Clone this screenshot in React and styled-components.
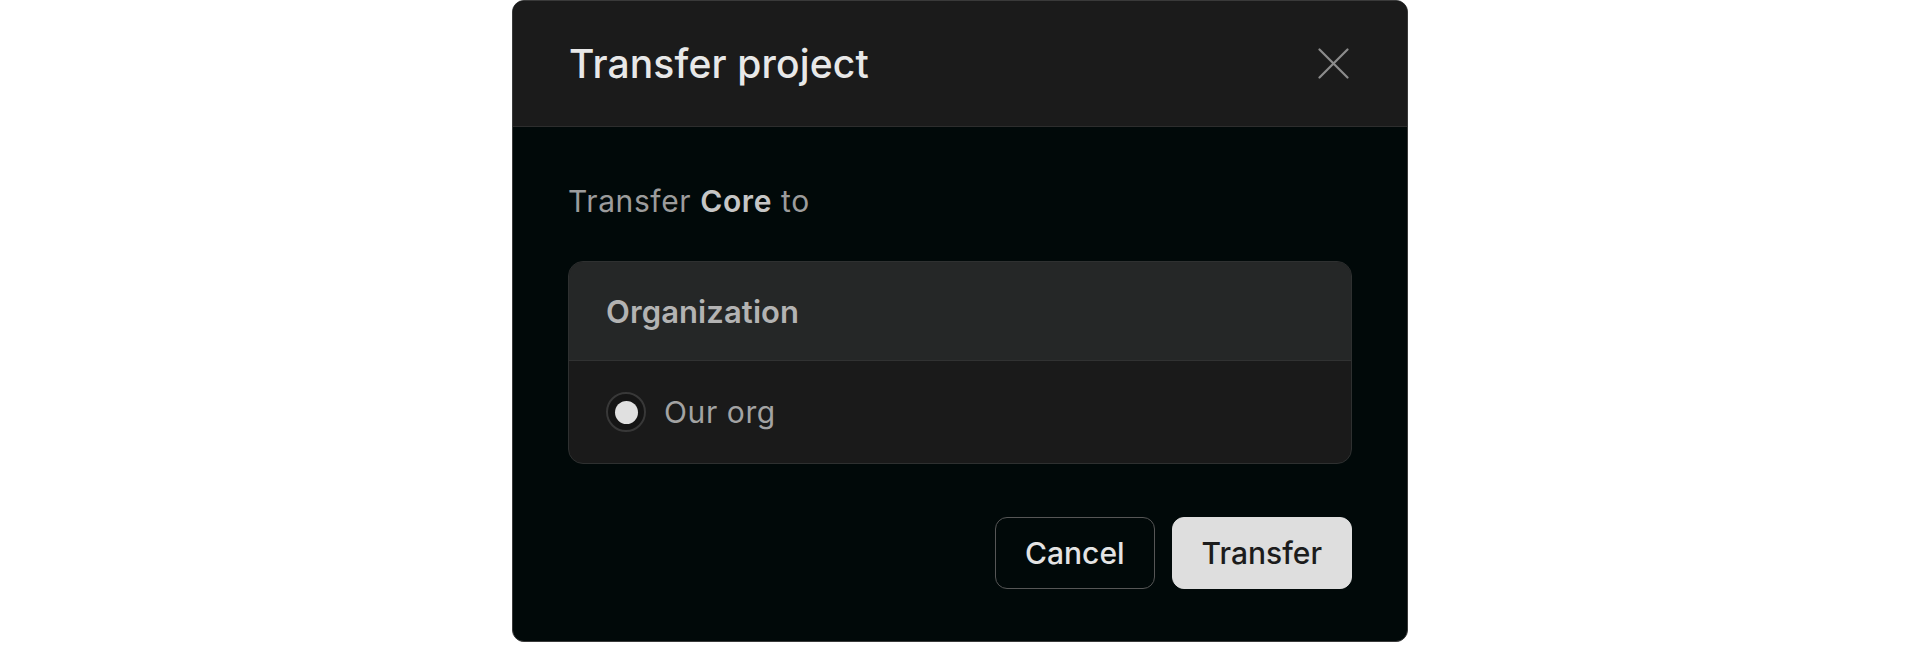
import React from "react";
import styled, { createGlobalStyle } from "styled-components";

const Global = createGlobalStyle`
  html, body { margin: 0; padding: 0; background: #ffffff; }
  body { font-family: Inter, "Noto Sans", "Liberation Sans", sans-serif; }
  * { box-sizing: border-box; }
`;

const Page = styled.div`
  display: flex;
  justify-content: center;
  background: #ffffff;
  min-height: 645px;
`;

const Modal = styled.div`
  width: 896px;
  height: 642px;
  display: flex;
  flex-direction: column;
  background: #010909;
  border: 1px solid #3a3a3a;
  border-radius: 12px;
  overflow: hidden;
`;

const Header = styled.div`
  height: 126px;
  flex: none;
  display: flex;
  align-items: center;
  justify-content: space-between;
  padding: 0 58px 0 56px;
  background: #1b1b1b;
  border-bottom: 1px solid #2d2d2d;
`;

const Title = styled.h2`
  margin: 0;
  font-size: 39px;
  font-weight: 500;
  color: #e8e8e8;
  letter-spacing: 0.15px;
`;

const CloseButton = styled.button`
  width: 32px;
  height: 32px;
  padding: 0;
  display: flex;
  align-items: center;
  justify-content: center;
  background: transparent;
  border: none;
  color: #8c8c8c;
  cursor: pointer;
`;

const Body = styled.div`
  flex: 1;
  display: flex;
  flex-direction: column;
  padding: 52px 55px 0 55px;
`;

const Lead = styled.p`
  margin: 0;
  font-size: 30px;
  line-height: 45px;
  color: #9c9c9c;
  font-weight: 400;
  letter-spacing: 0.6px;

  b {
    font-weight: 600;
    color: #c6c6c6;
  }
`;

const Card = styled.div`
  margin-top: 37px;
  border: 1px solid #2e3030;
  border-radius: 15px;
  overflow: hidden;
  background: #1a1a1a;
`;

const CardHeader = styled.div`
  height: 99px;
  display: flex;
  align-items: center;
  padding: 0 37px;
  background: #252727;
  border-bottom: 1px solid #313232;
  font-size: 31px;
  font-weight: 600;
  color: #b3b3b3;
  letter-spacing: 0.1px;
`;

const OptionRow = styled.label`
  height: 102px;
  display: flex;
  align-items: center;
  gap: 18px;
  padding: 0 37px;
  font-size: 30px;
  color: #a3a3a3;
  letter-spacing: 0.6px;
  cursor: pointer;
`;

const Radio = styled.span`
  width: 40px;
  height: 40px;
  flex: none;
  border-radius: 50%;
  border: 2px solid ${(p) => (p.$checked ? "#383838" : "#2e2e2e")};
  background: #151515;
  display: flex;
  align-items: center;
  justify-content: center;

  &::after {
    content: "";
    width: 23px;
    height: 23px;
    border-radius: 50%;
    background: ${(p) => (p.$checked ? "#e0e0e0" : "transparent")};
  }
`;

const Footer = styled.div`
  display: flex;
  justify-content: flex-end;
  gap: 17px;
  margin-top: 53px;
`;

const Button = styled.button`
  height: 72px;
  padding: 0 29px;
  border-radius: 12px;
  font-family: inherit;
  font-size: 30px;
  font-weight: 500;
  cursor: pointer;
  border: 1px solid ${(p) => (p.$primary ? "#dedede" : "#565656")};
  background: ${(p) => (p.$primary ? "#dedede" : "transparent")};
  color: ${(p) => (p.$primary ? "#1c1c1c" : "#e4e4e4")};
`;

export default function App() {
  return (
    <>
      <Global />
      <Page>
        <Modal>
          <Header>
            <Title>Transfer project</Title>
            <CloseButton aria-label="Close">
              <svg width="31" height="31" viewBox="0 0 31 31" fill="none">
                <path d="M1.5 1.5L29.5 29.5M29.5 1.5L1.5 29.5" stroke="currentColor" strokeWidth="2.2" strokeLinecap="round" />
              </svg>
            </CloseButton>
          </Header>
          <Body>
            <Lead>
              Transfer <b>Core</b> to
            </Lead>
            <Card>
              <CardHeader>Organization</CardHeader>
              <OptionRow>
                <Radio $checked />
                Our org
              </OptionRow>
            </Card>
            <Footer>
              <Button>Cancel</Button>
              <Button $primary>Transfer</Button>
            </Footer>
          </Body>
        </Modal>
      </Page>
    </>
  );
}
